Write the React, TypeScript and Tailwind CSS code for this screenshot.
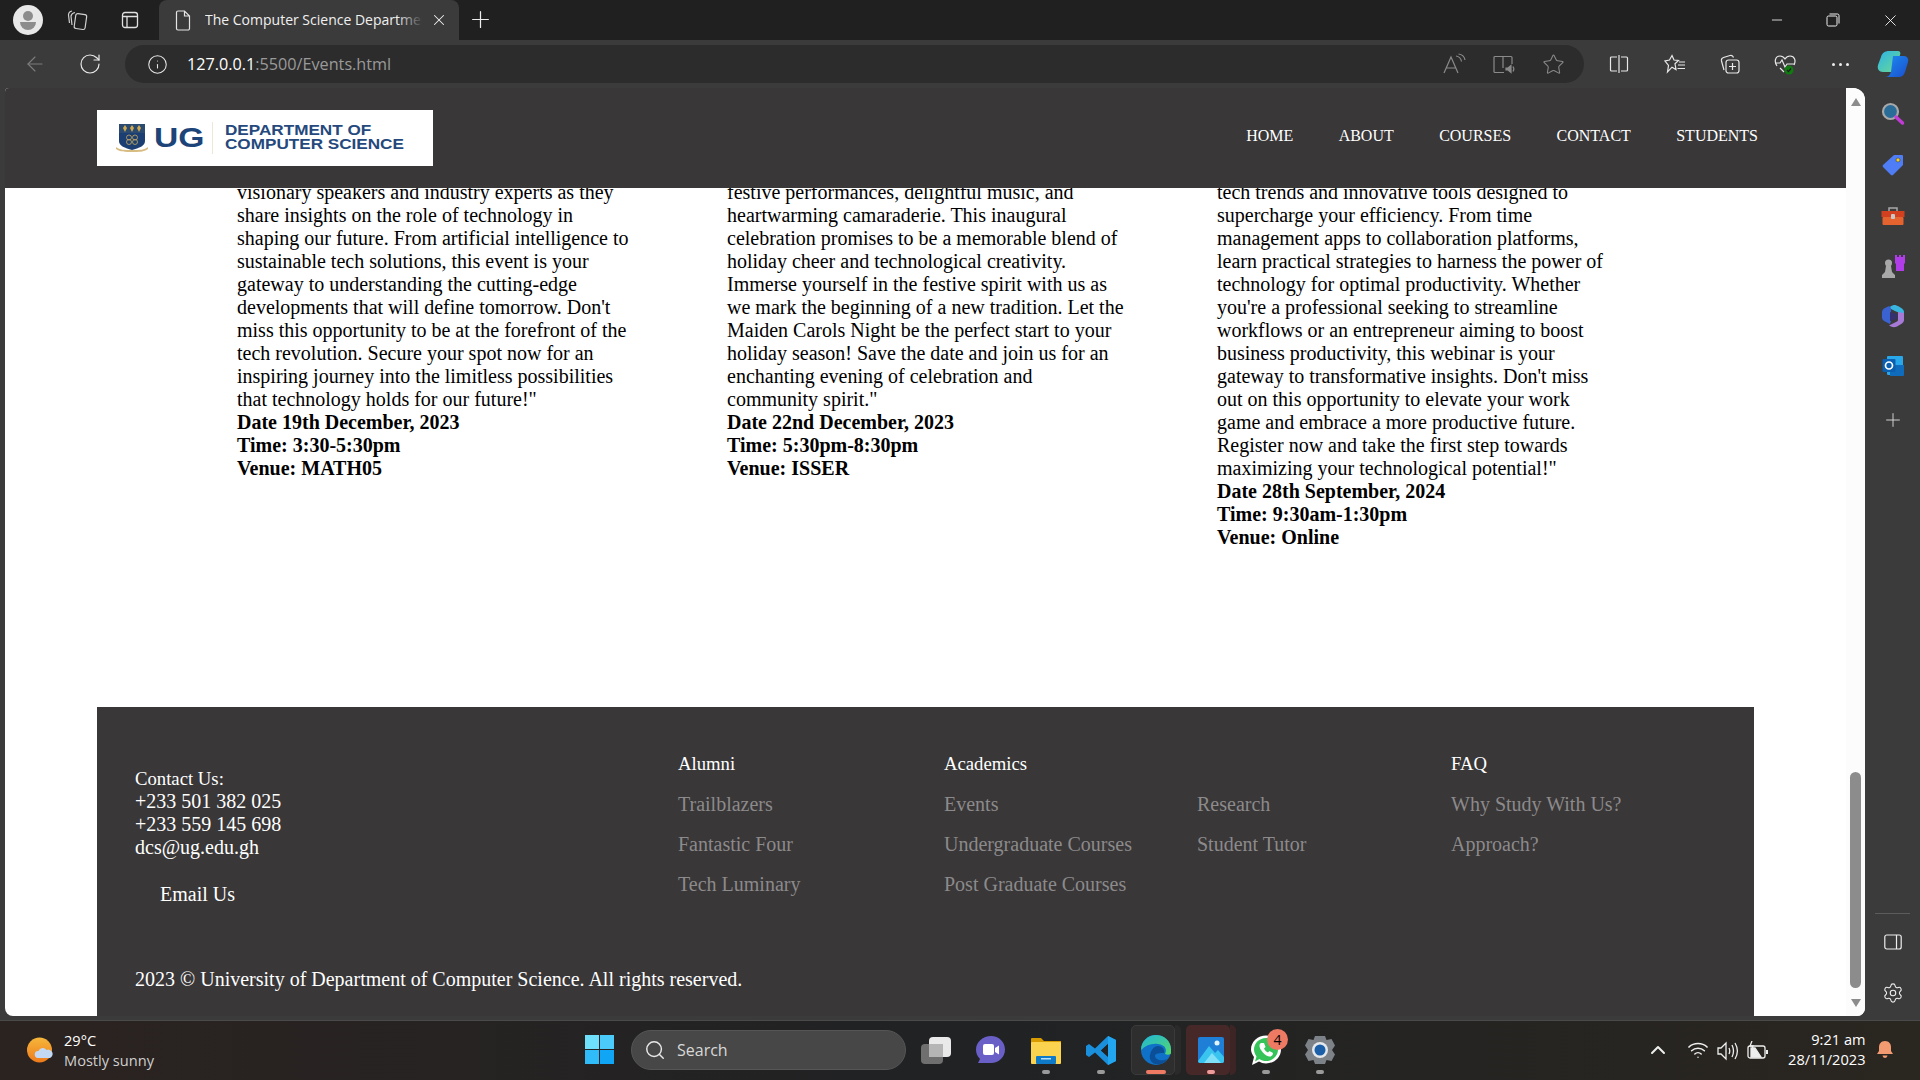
import { ArrowLeft, ChevronUp, Info, Minus, Plus, RotateCw, Search, Star, Wifi, X, Settings } from "lucide-react";

const ui = "font-['Open_Sans',sans-serif]";

const columns = [
  {
    body: "visionary speakers and industry experts as they share insights on the role of technology in shaping our future. From artificial intelligence to sustainable tech solutions, this event is your gateway to understanding the cutting-edge developments that will define tomorrow. Don't miss this opportunity to be at the forefront of the tech revolution. Secure your spot now for an inspiring journey into the limitless possibilities that technology holds for our future!\"",
    date: "Date 19th December, 2023",
    time: "Time: 3:30-5:30pm",
    venue: "Venue: MATH05",
  },
  {
    body: "festive performances, delightful music, and heartwarming camaraderie. This inaugural celebration promises to be a memorable blend of holiday cheer and technological creativity. Immerse yourself in the festive spirit with us as we mark the beginning of a new tradition. Let the Maiden Carols Night be the perfect start to your holiday season! Save the date and join us for an enchanting evening of celebration and community spirit.\"",
    date: "Date 22nd December, 2023",
    time: "Time: 5:30pm-8:30pm",
    venue: "Venue: ISSER",
  },
  {
    body: "tech trends and innovative tools designed to supercharge your efficiency. From time management apps to collaboration platforms, learn practical strategies to harness the power of technology for optimal productivity. Whether you're a professional seeking to streamline workflows or an entrepreneur aiming to boost business productivity, this webinar is your gateway to transformative insights. Don't miss out on this opportunity to elevate your work game and embrace a more productive future. Register now and take the first step towards maximizing your technological potential!\"",
    date: "Date 28th September, 2024",
    time: "Time: 9:30am-1:30pm",
    venue: "Venue: Online",
  },
];

function Crest() {
  return (
    <svg width="34" height="30" viewBox="0 0 34 30" className="shrink-0">
      <path d="M4 1h26v17c0 5-6 7-13 9C10 25 4 23 4 18z" fill="#1c3f73" />
      <path d="M4 1h26v9H4z" fill="#2a4a70" />
      <path d="M10 2l2 3-2 4-2-4zM17 2l2 3-2 4-2-4zM24 2l2 3-2 4-2-4z" fill="#d0a94f" />
      <circle cx="14" cy="14.5" r="2.5" fill="none" stroke="#c9a95c" strokeWidth="0.8" />
      <circle cx="20" cy="14.5" r="2.5" fill="none" stroke="#c9a95c" strokeWidth="0.8" />
      <circle cx="14" cy="19" r="2.5" fill="none" stroke="#c9a95c" strokeWidth="0.8" />
      <circle cx="20" cy="19" r="2.5" fill="none" stroke="#c9a95c" strokeWidth="0.8" />
      <path d="M1 24c4 3 8 3 16 3s12 0 16-3v2c-4 3-9 3-16 3S5 29 1 26z" fill="#d8bd83" />
    </svg>
  );
}

function Logo() {
  return (
    <div className="w-[336px] h-[56px] bg-white flex items-center pl-[18px] shrink-0">
      <Crest />
      <span className="ml-[5px] w-[50px] text-[28px] leading-none font-bold text-[#1c4479] font-['Liberation_Sans',sans-serif] origin-left scale-x-[1.2]">UG</span>
      <div className="w-px h-[32px] bg-[#eee6d6] ml-[8px]" />
      <div className="ml-[12px] -mt-[2px] font-['Liberation_Sans',sans-serif] font-bold text-[15.5px] leading-[14px] text-[#25497c] whitespace-nowrap origin-left scale-x-[1.105]">
        <div>DEPARTMENT OF</div>
        <div>COMPUTER SCIENCE</div>
      </div>
    </div>
  );
}

function TitleBar() {
  return (
    <div className={`h-10 bg-[#202020] flex items-center text-white shrink-0 ${ui}`}>
      <div className="w-[30px] h-[30px] ml-[13px] rounded-full bg-[#e8e8e8] relative overflow-hidden">
        <div className="absolute left-[10px] top-[6px] w-[10px] h-[10px] rounded-full bg-[#8c8c8c]" />
        <div className="absolute left-[7px] top-[17px] w-[16px] h-[8px] rounded-b-full bg-[#8c8c8c]" />
      </div>
      <svg width="24" height="24" viewBox="0 0 24 24" fill="none" stroke="#d0d0d0" strokeWidth="1.2" className="ml-[23px]">
        <rect x="9" y="6" width="11" height="15" rx="2" transform="rotate(8 14 13)" />
        <path d="M9 4.5C6.5 5 5.5 6 5 8l1 9M6 3C3.5 3.5 2.5 5 2.5 7l1 8" />
      </svg>
      <svg width="20" height="20" viewBox="0 0 20 20" fill="none" stroke="#e0e0e0" strokeWidth="1.3" className="ml-[30px]">
        <rect x="2.5" y="2.5" width="15" height="15" rx="2.5" />
        <path d="M2.5 6.5h15M7 6.5v11" />
      </svg>
      <div className="ml-[19px] w-[300px] h-10 bg-[#3b3b3b] rounded-t-lg flex items-center relative">
        <svg width="18" height="22" viewBox="0 0 18 22" fill="none" stroke="#e4e4e4" strokeWidth="1.2" className="ml-[15px]">
          <path d="M2.5 3.5A1.5 1.5 0 0 1 4 2h6.5l5 5v12.5A1.5 1.5 0 0 1 14 21H4a1.5 1.5 0 0 1-1.5-1.5zM10.5 2v5h5" />
        </svg>
        <span className="ml-[13px] -mt-[1px] w-[217px] overflow-hidden whitespace-nowrap text-[14px] text-[#f0f0f0]">The Computer Science Department</span>
        <div className="absolute left-[238px] top-0 w-[26px] h-10 bg-gradient-to-r from-transparent to-[#3b3b3b]" />
        <X size={18} strokeWidth={1.4} className="absolute left-[271px] text-[#eee]" />
      </div>
      <Plus size={27} strokeWidth={1.1} className="ml-[8px] -mt-[1px] text-[#eee]" />
      <div className="ml-auto flex items-center pr-[20px] gap-[41px]">
        <Minus size={16} strokeWidth={1.2} />
        <svg width="14" height="14" viewBox="0 0 14 14" fill="none" stroke="#eee" strokeWidth="1">
          <rect x="1" y="3" width="10" height="10" rx="1.500" />
          <path d="M3.500 1h8A1.500 1.500 0 0 1 13 2.500v8" />
        </svg>
        <X size={19} strokeWidth={1.1} />
      </div>
    </div>
  );
}

function ToolbarIcon({ children, left }: { children: React.ReactNode; left: number }) {
  return (
    <div className="absolute top-0 h-12 w-8 -ml-4 flex items-center justify-center" style={{ left }}>
      {children}
    </div>
  );
}

function Toolbar() {
  return (
    <div className={`h-12 bg-[#3b3b3b] flex items-center shrink-0 relative ${ui}`}>
      <ArrowLeft size={24} strokeWidth={1.1} className="ml-[23px] text-[#7d7d7d]" />
      <RotateCw size={24} strokeWidth={1.2} className="ml-[31px] text-[#e8e8e8]" />
      <div className="ml-[23px] w-[1459px] h-[38px] rounded-full bg-[#2c2c2c] flex items-center pl-[22px]">
        <Info size={21} strokeWidth={1.2} className="text-[#e8e8e8]" />
        <span className="ml-[19px] text-[16.2px] text-white whitespace-nowrap">
          127.0.0.1<span className="text-[#9a9a9a]">:5500/Events.html</span>
        </span>
      </div>
      <ToolbarIcon left={1454}>
        <svg width="24" height="22" viewBox="0 0 24 22" fill="none" stroke="#8a8a8a" strokeWidth="1.2">
          <path d="M2 20 9 4l7 16M4.500 15h9M14 3c3 .5 5 2.500 5.500 5.500M16.500 1c3.500 .5 6 3 6.500 6" />
        </svg>
      </ToolbarIcon>
      <ToolbarIcon left={1504}>
        <svg width="24" height="22" viewBox="0 0 24 22" fill="none" stroke="#8a8a8a" strokeWidth="1.2">
          <path d="M11 3.500H3a1 1 0 0 0-1 1v14a1 1 0 0 0 1 1h9M11 3.500V15M11 3.500h8a1 1 0 0 1 1 1V11" />
          <path d="M14 15h2l3-2.500v7L16 17h-2z" fill="#8a8a8a" />
          <path d="M21 13.500c1 1.500 1 3.500 0 5" />
        </svg>
      </ToolbarIcon>
      <ToolbarIcon left={1553}>
        <Star size={23} strokeWidth={1.1} className="text-[#8a8a8a]" />
      </ToolbarIcon>
      <ToolbarIcon left={1619}>
        <svg width="20" height="20" viewBox="0 0 20 20" fill="none" stroke="#e8e8e8" strokeWidth="1.2">
          <path d="M8 3H2.500A1 1 0 0 0 1.500 4v12a1 1 0 0 0 1 1H8M10 1v18M12 3h5.500a1 1 0 0 1 1 1v12a1 1 0 0 1-1 1H12" />
        </svg>
      </ToolbarIcon>
      <ToolbarIcon left={1675}>
        <svg width="22" height="20" viewBox="0 0 22 20" fill="none" stroke="#e8e8e8" strokeWidth="1.2">
          <path d="M8 1.500l2 4.500 4.500.5-3.500 3.300 1 5.700-4-2.300L3.500 18l1-6.500L1 7l4.500-1zM15 8h6M14 11h7M13.500 14.500h7.500" />
        </svg>
      </ToolbarIcon>
      <ToolbarIcon left={1730}>
        <svg width="22" height="22" viewBox="0 0 22 22" fill="none" stroke="#e8e8e8" strokeWidth="1.2">
          <rect x="7" y="7" width="13" height="13" rx="2.500" />
          <path d="M13.500 10v7M10 13.500h7M5 17l-2.500-9A3 3 0 0 1 4.500 4.500L11 2.500c1.500-.4 3 .3 3.500 2" />
        </svg>
      </ToolbarIcon>
      <ToolbarIcon left={1785}>
        <svg width="24" height="24" viewBox="0 0 24 24" fill="none" stroke="#e8e8e8" strokeWidth="1.2">
          <path d="M4 14C1 10 2 4 7 4c2.500 0 4 1.500 5 3 1-1.500 2.500-3 5-3 5 0 6 5 4 9M2 11h5l2-3 3 7 2-3h8M7 16l4 4" />
          <circle cx="16" cy="18" r="4.500" fill="#107c10" stroke="none" />
          <path d="M14 18l1.500 1.500 2.500-3" stroke="#202020" />
        </svg>
      </ToolbarIcon>
      <ToolbarIcon left={1840}>
        <div className="flex gap-[4px]">
          <div className="w-[3px] h-[3px] rounded-full bg-[#eee]" />
          <div className="w-[3px] h-[3px] rounded-full bg-[#eee]" />
          <div className="w-[3px] h-[3px] rounded-full bg-[#eee]" />
        </div>
      </ToolbarIcon>
      <ToolbarIcon left={1893}>
        <svg width="32" height="28" viewBox="0 0 32 28">
          <defs>
            <linearGradient id="cpa" x1="0" y1="0" x2="1" y2="1">
              <stop offset="0" stopColor="#2bb5e8" />
              <stop offset="1" stopColor="#6ed98f" />
            </linearGradient>
            <linearGradient id="cpb" x1="0" y1="0" x2="1" y2="1">
              <stop offset="0" stopColor="#1d8cf0" />
              <stop offset="1" stopColor="#1a4fd0" />
            </linearGradient>
          </defs>
          <path d="M12 1h9c2 0 3 2 2 4l-6 17H6c-4 0-6-3-5-7l3-8c1-4 4-6 8-6z" fill="url(#cpa)" />
          <path d="M16 6h11c3 0 5 3 4 6l-3 10c-1 3-3 5-7 5H8c3 0 5-2 6-5z" fill="url(#cpb)" />
        </svg>
      </ToolbarIcon>
    </div>
  );
}

function SideRail() {
  return (
    <div className="w-[55px] flex flex-col items-center shrink-0 pt-[1px]">
      <div className="h-[50px] flex items-center">
        <svg width="24" height="24" viewBox="0 0 24 24" fill="none">
          <circle cx="9.500" cy="9.500" r="7.500" fill="#2a6c98" stroke="#a8a8a8" strokeWidth="2.200" />
          <path d="M15 15l6.500 6" stroke="#c23bd6" strokeWidth="3.500" strokeLinecap="round" />
        </svg>
      </div>
      <div className="h-[52px] flex items-center">
        <svg width="22" height="22" viewBox="0 0 22 22">
          <path d="M12 1h8a1 1 0 0 1 1 1v9L11 21a1.500 1.500 0 0 1-2 0L1 13a1.500 1.500 0 0 1 0-2z" fill="#4f7df5" />
          <circle cx="16" cy="6" r="2" fill="#f0d020" stroke="#333" strokeWidth="0.500" />
        </svg>
      </div>
      <div className="h-[50px] flex items-center">
        <svg width="24" height="20" viewBox="0 0 24 20">
          <path d="M8 5V2h8v3" fill="none" stroke="#a8a8a8" strokeWidth="1.500" />
          <rect x="0.500" y="5" width="23" height="6" fill="#d3401f" />
          <rect x="1.500" y="11" width="21" height="8" rx="1" fill="#e5632f" />
          <rect x="10" y="8" width="4" height="5" rx="1" fill="#c8c8c8" />
        </svg>
      </div>
      <div className="h-[50px] flex items-center">
        <svg width="24" height="24" viewBox="0 0 24 24">
          <path d="M14 1h2v2h2V1h2v2h2V1h2v8l-1 1v7h-8v-7l-1-1z" fill="#b13de8" />
          <circle cx="7.500" cy="9" r="3.500" fill="#a8a8a8" />
          <path d="M5 12h5l1 6 3 3v3H1v-3l3-3z" fill="#a8a8a8" />
        </svg>
      </div>
      <div className="h-[50px] flex items-center">
        <svg width="22" height="24" viewBox="0 0 22 24">
          <path d="M9 2c3-1.500 4-1.500 7 0l4 2.500c1 .7 2 2 2 3.500v3L13 7 7 4z" fill="#38b6e0" />
          <path d="M22 9v7c0 1.500-1 2.800-2 3.500l-5 3c-2 1-4 1-6 0l-2-1 8-4c1-.6 1-1.500 1-2.500V8z" fill="#a87ad8" />
          <path d="M0 8c0-1.500 1-2.800 2-3.500L7 2l2 2v13l-1 3-6-3c-1-.7-2-2-2-3.500z" fill="#3a62d0" />
          <path d="M8 8l7 2v5l-7 2z" fill="#35306e" />
        </svg>
      </div>
      <div className="h-[50px] flex items-center">
        <svg width="22" height="22" viewBox="0 0 22 22">
          <rect x="5" y="1" width="16" height="19" rx="1" fill="#28a8ea" />
          <path d="M8 10h14v10a1 1 0 0 1-1 1H8z" fill="#0f6cbd" />
          <rect x="0.500" y="4" width="13" height="13" rx="1" fill="#0a5fb0" />
          <circle cx="7" cy="10.500" r="3.500" fill="none" stroke="#fff" strokeWidth="1.700" />
        </svg>
      </div>
      <div className="h-[57px] flex items-center">
        <Plus size={22} strokeWidth={1} className="text-[#dcdcdc]" />
      </div>
      <div className="mt-auto w-[35px] h-px bg-[#5c5c5c]" />
      <div className="h-[56px] flex items-center">
        <svg width="18" height="16" viewBox="0 0 18 16" fill="none" stroke="#eee" strokeWidth="1.200">
          <rect x="0.800" y="1" width="16.400" height="14" rx="2" />
          <path d="M12.500 1v14" />
        </svg>
      </div>
      <div className="h-[46px] flex items-center">
        <Settings size={22} strokeWidth={1.2} className="text-[#eee]" />
      </div>
    </div>
  );
}

function Scrollbar() {
  return (
    <div className="w-[19px] bg-[#fcfcfc] flex flex-col items-center shrink-0 relative">
      <div className="mt-[10px] w-0 h-0 border-x-[5.500px] border-x-transparent border-b-[8px] border-b-[#8c8c8c]" />
      <div className="mt-[666px] w-[11px] h-[216px] rounded-full bg-[#8c8c8c]" />
      <div className="mt-[11px] w-0 h-0 border-x-[5.500px] border-x-transparent border-t-[8px] border-t-[#8c8c8c]" />
    </div>
  );
}

function Nav() {
  return (
    <nav className="h-[100px] bg-[#393738] flex items-center pl-[92px] pr-[88px] justify-between shrink-0 relative z-10 text-white text-[16px]">
      <Logo />
      <div className="flex gap-[45.4px] mb-[5px]">
        <a>HOME</a>
        <a>ABOUT</a>
        <a>COURSES</a>
        <a>CONTACT</a>
        <a>STUDENTS</a>
      </div>
    </nav>
  );
}

function FooterLinks({ title, items, width }: { title?: string; items: string[]; width: string }) {
  return (
    <div className={`${width} shrink-0`}>
      <h4 className="text-[18.72px] leading-[23px] text-white h-[23px]">{title}</h4>
      <ul className="mt-[18px] flex flex-col gap-[17px] text-[#8c8a8b]">
        {items.map((item) => (
          <li key={item}>{item}</li>
        ))}
      </ul>
    </div>
  );
}

function Footer() {
  return (
    <footer className="ml-[92px] w-[1657px] h-[309px] bg-[#393738] shrink-0 pl-[38px] text-white flex flex-col">
      <div className="flex pt-[45px]">
        <div className="w-[543px] shrink-0 pt-[15px]">
          <div className="text-[18.72px]">Contact Us:</div>
          <div>+233 501 382 025</div>
          <div>+233 559 145 698</div>
          <div>dcs@ug.edu.gh</div>
          <div className="mt-[24px] ml-[25px]">Email Us</div>
        </div>
        <FooterLinks title="Alumni" items={["Trailblazers", "Fantastic Four", "Tech Luminary"]} width="w-[266px]" />
        <FooterLinks title="Academics" items={["Events", "Undergraduate Courses", "Post Graduate Courses"]} width="w-[253px]" />
        <FooterLinks items={["Research", "Student Tutor"]} width="w-[254px]" />
        <FooterLinks title="FAQ" items={["Why Study With Us?", "Approach?"]} width="w-[250px]" />
      </div>
      <p className="mt-[62px]">2023 © University of Department of Computer Science. All rights reserved.</p>
    </footer>
  );
}

function Page() {
  return (
    <div className="ml-[5px] w-[1860px] h-[928px] rounded-tr-xl rounded-tl-sm rounded-b-lg overflow-hidden bg-white flex font-['Liberation_Serif',serif] text-[20px] leading-[23px]">
      <div className="flex-1 flex flex-col min-w-0">
        <Nav />
        <div className="flex-1 min-h-0 flex pl-[232px] -mt-[7px] text-black">
          {columns.map((c) => (
            <div key={c.date} className="w-[400px] mr-[90px] shrink-0">
              <p>{c.body}</p>
              <div className="font-bold">{c.date}</div>
              <div className="font-bold">{c.time}</div>
              <div className="font-bold">{c.venue}</div>
            </div>
          ))}
        </div>
        <Footer />
      </div>
      <Scrollbar />
    </div>
  );
}

function TaskIcon({ children, left, dot }: { children: React.ReactNode; left: number; dot?: string }) {
  return (
    <div className="absolute top-0 h-[58px] w-[44px] -ml-[22px] flex items-center justify-center" style={{ left }}>
      {children}
      {dot && <div className={`absolute bottom-[5px] left-1/2 -translate-x-1/2 h-[4px] rounded-full ${dot}`} />}
    </div>
  );
}

function Taskbar() {
  return (
    <div className={`h-[60px] border-t border-[#4a4a4a] bg-gradient-to-r from-[#2b2320] via-[#202224] to-[#2a2620] relative flex items-center shrink-0 text-white ${ui}`}>
      <svg width="26" height="26" viewBox="0 0 26 26" className="ml-[27px] -mt-[1px] shrink-0">
        <defs>
          <linearGradient id="sun" x1="0" y1="0" x2="0" y2="1">
            <stop offset="0" stopColor="#f6b73c" />
            <stop offset="1" stopColor="#ee7a1a" />
          </linearGradient>
        </defs>
        <circle cx="12.500" cy="13" r="12.500" fill="url(#sun)" />
        <path d="M11 21a3.500 3.500 0 0 1 .5-7 4.500 4.500 0 0 1 8-1 4 4 0 0 1 3.500 8z" fill="#c3d9f3" />
      </svg>
      <div className="ml-[11px] -mt-[2px] text-[14.6px] leading-[20px] whitespace-nowrap">
        <div>29°C</div>
        <div className="text-[#cfcfcf]">Mostly sunny</div>
      </div>
      <div className="absolute left-[585px] top-[14px] grid grid-cols-2 gap-[1.500px] w-[29px] h-[29px]">
        <div className="bg-[#6fe0fb]" />
        <div className="bg-[#4bcbfa]" />
        <div className="bg-[#2fbcf9]" />
        <div className="bg-[#11a5f5]" />
      </div>
      <div className="absolute left-[631px] top-[9px] w-[275px] h-[40px] rounded-full bg-[#474747] border border-[#555] flex items-center pl-[12px]">
        <Search size={22} strokeWidth={1.6} className="text-[#e8e8e8]" />
        <span className="ml-[11px] text-[16px] text-[#d8d8d8]">Search</span>
      </div>
      <TaskIcon left={936}>
        <div className="relative w-[30px] h-[27px]">
          <div className="absolute left-0 bottom-0 w-[22px] h-[20px] rounded-sm bg-[#6f6f6f]" />
          <div className="absolute right-0 top-0 w-[22px] h-[20px] rounded-sm bg-[#e9e9e9]" />
          <div className="absolute left-[8px] top-[7px] w-[14px] h-[13px] bg-[#b5b5b5]" />
        </div>
      </TaskIcon>
      <TaskIcon left={990}>
        <svg width="29" height="28" viewBox="0 0 29 28">
          <path d="M15 0c8 0 14 6 14 13.500S23 27 15 27H2l2-4C1 20 0 17 0 13.500 0 6 7 0 15 0z" fill="#6a5fc6" />
          <rect x="7" y="8" width="11" height="11" rx="2" fill="#fff" />
          <path d="M19 12l4-2.500v9L19 16z" fill="#fff" />
        </svg>
      </TaskIcon>
      <TaskIcon left={1046} dot="w-[8px] bg-[#9a9a9a]">
        <svg width="30" height="27" viewBox="0 0 30 27">
          <path d="M0 2a1 1 0 0 1 1-1h9l3 3h17v4H0z" fill="#d99c00" />
          <rect x="0" y="5" width="30" height="22" rx="1" fill="#fbd34e" />
          <rect x="5" y="19" width="20" height="8" rx="1" fill="#0f7bc8" />
          <rect x="10" y="21" width="10" height="1.500" fill="#b8e0f8" />
        </svg>
      </TaskIcon>
      <TaskIcon left={1101} dot="w-[8px] bg-[#9a9a9a]">
        <svg width="31" height="31" viewBox="0 0 31 31">
          <path d="M22 1l8 4v21l-8 4-13-12.500L3 22l-3-2v-9l3-2 6 4.500zM22 9l-7 6.500 7 6z" fill="#1a8fdc" />
          <path d="M22 1l8 4v21l-8 4z" fill="#23a6f0" />
          <path d="M22 9v13l-7-6.500z" fill="#202224" />
        </svg>
      </TaskIcon>
      <div className="absolute left-[1175px] top-[4px] w-[6px] h-[50px] rounded-r-[5px] bg-[#2a2a2a]" />
      <div className="absolute left-[1131px] top-[4px] w-[44px] h-[50px] rounded-[5px] bg-[#2e2e2e] border border-[#3a3a3a]" />
      <TaskIcon left={1156} dot="w-[20px] bg-[#ee7a64]">
        <svg width="30" height="30" viewBox="0 0 30 30">
          <defs>
            <linearGradient id="eg" x1="0" y1="0" x2="1" y2="1">
              <stop offset="0" stopColor="#1fb6d8" />
              <stop offset="1" stopColor="#55d66e" />
            </linearGradient>
          </defs>
          <circle cx="15" cy="15" r="15" fill="#0f72c8" />
          <path d="M0 15C0 6 7 0 15 0c8 0 15 6 15 14v4c0 2-4 2-6 1 2-4 1-9-7-10-6-1-12 1-17 6z" fill="url(#eg)" />
          <path d="M17 11c4 0 7 3 6 7-4 0-9 0-9 3s6 6 12 3c-3 5-8 6-12 5-4-1-6-6-5-9 1-5 4-9 8-9z" fill="#0c4f99" />
        </svg>
      </TaskIcon>
      <div className="absolute left-[1230px] top-[4px] w-[6px] h-[50px] rounded-r-[5px] bg-[#3d2525]" />
      <div className="absolute left-[1186px] top-[4px] w-[44px] h-[50px] rounded-[5px] bg-[#472828]" />
      <TaskIcon left={1211} dot="w-[8px] bg-[#f09a9a]">
        <svg width="26" height="26" viewBox="0 0 26 26">
          <rect x="0" y="0" width="26" height="26" rx="2" fill="#1f7fd6" />
          <circle cx="19" cy="6" r="2.500" fill="#e2f2ff" />
          <path d="M0 24L11 9l6 7 3-3 6 7v4a2 2 0 0 1-2 2H2a2 2 0 0 1-2-2z" fill="#39c4f0" />
          <path d="M6 26l8-10 9 10z" fill="#7fe0f7" />
        </svg>
      </TaskIcon>
      <TaskIcon left={1266} dot="w-[8px] bg-[#9a9a9a]">
        <svg width="30" height="30" viewBox="0 0 30 30">
          <path d="M1 30l2-8C1 19 0 17 0 14.500 0 6.500 7 .5 15 .5s15 6 15 14-7 14-15 14c-3 0-5-1-7-2z" fill="#fff" />
          <path d="M4 26.500l1.500-5C4 19 3 17 3 14.500 3 8 8.500 3 15 3s12 5 12 11.500S21.500 26 15 26c-2.500 0-4.500-.5-6.500-2z" fill="#36c45a" />
          <path d="M10 8c-2 1-2 4 0 7s5 6 8 6.500 4-2 4-3.500l-3.500-2-1.500 1.500c-2-1-3.500-2.500-4-4l1.500-1.500L13 8z" fill="#fff" />
        </svg>
        <div className="absolute left-[23px] top-[8px] w-[21px] h-[21px] rounded-full bg-[#ee7a64] text-black text-[14px] leading-[21px] text-center">4</div>
      </TaskIcon>
      <TaskIcon left={1320} dot="w-[8px] bg-[#9a9a9a]">
        <svg width="30" height="28" viewBox="0 0 30 28">
          <path d="M10 0h10l1.500 4 5-1L30 9.500 27 14l3 4.500-3.500 6.500-5-1L20 28H10l-1.500-4-5 1L0 18.500 3 14 0 9.500 3.500 3l5 1z" fill="#7d8288" />
          <circle cx="15" cy="14" r="8" fill="#e4e8ec" />
          <circle cx="15" cy="14" r="5.500" fill="#1b5fa8" />
        </svg>
      </TaskIcon>
      <ChevronUp size={24} strokeWidth={2} className="absolute left-[1646px] top-[17px] text-[#eee]" />
      <Wifi size={22} strokeWidth={1.6} className="absolute left-[1687px] top-[18px] text-[#eee]" />
      <svg width="22" height="20" viewBox="0 0 22 20" fill="none" stroke="#eee" strokeWidth="1.300" className="absolute left-[1717px] top-[20px]">
        <path d="M1 7h3l5-5v16l-5-5H1zM12 7c1 2 1 4 0 6M15 4c2 4 2 8 0 12M18 2c3 5 3 11 0 16" />
      </svg>
      <svg width="22" height="20" viewBox="0 0 22 20" fill="none" stroke="#eee" strokeWidth="1.300" className="absolute left-[1747px] top-[20px]">
        <rect x="1" y="5" width="17" height="12" rx="2" />
        <path d="M4 16V7h4l6 9z" fill="#eee" />
        <path d="M20 9v4" strokeWidth="2" />
        <path d="M5 0L3 5h3l-1 4" />
      </svg>
      <div className="absolute right-[54.500px] top-[8px] text-right text-[14.6px] leading-[20px] whitespace-nowrap">
        <div>9:21 am</div>
        <div>28/11/2023</div>
      </div>
      <svg width="18" height="20" viewBox="0 0 18 20" className="absolute left-[1876px] top-[19px]">
        <path d="M9 1c4 0 6 3 6 6v4l2 3H1l2-3V7c0-3 2-6 6-6z" fill="#f29a70" />
        <path d="M6.500 15.500h5a2.500 2.500 0 0 1-5 0z" fill="#f29a70" />
      </svg>
    </div>
  );
}

export default function App() {
  return (
    <div className="w-[1920px] h-[1080px] overflow-hidden bg-[#3b3b3b] flex flex-col">
      <TitleBar />
      <Toolbar />
      <div className="flex h-[928px] shrink-0">
        <Page />
        <SideRail />
      </div>
      <div className="h-[4px] shrink-0" />
      <Taskbar />
    </div>
  );
}
